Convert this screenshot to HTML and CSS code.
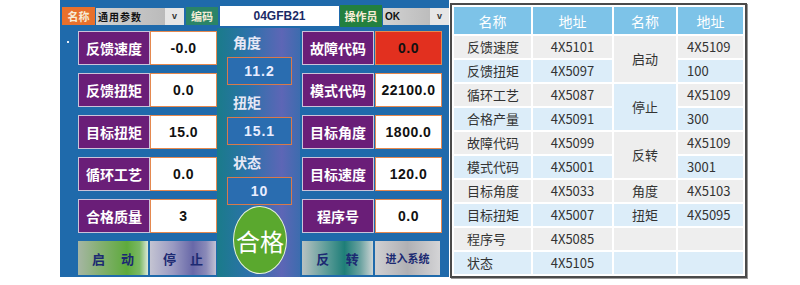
FILE: index.html
```html
<!DOCTYPE html>
<html lang="zh">
<head>
<meta charset="utf-8">
<link rel="stylesheet" href="styles.css">
</head>
<body>
<div class="page">
  <div class="panel">
    <div class="topbar">
      <span class="tag tag-orange">名称</span>
      <div class="select sel-param"><span class="sel-text">通用参数</span><span class="sel-arrow">v</span></div>
      <span class="tag tag-green tag-code">编码</span>
      <div class="code-box">04GFB21</div>
      <span class="tag tag-green tag-op">操作员</span>
      <div class="select sel-op"><span class="sel-text">OK</span><span class="sel-arrow">v</span></div>
    </div>
    <div class="main">
      <div class="gutter"><span class="dot"></span></div>
      <div class="fields">
        <div class="label">反馈速度</div><div class="value">-0.0</div>
        <div class="label">反馈扭矩</div><div class="value">0.0</div>
        <div class="label">目标扭矩</div><div class="value">15.0</div>
        <div class="label">循环工艺</div><div class="value">0.0</div>
        <div class="label">合格质量</div><div class="value">3</div>
        <div class="btn btn-start"><span>启</span><span>动</span></div>
        <div class="btn btn-stop"><span>停</span><span>止</span></div>
      </div>
      <div class="mid">
        <div class="mid-label first">角度</div>
        <div class="mid-box">11.2</div>
        <div class="mid-label">扭矩</div>
        <div class="mid-box">15.1</div>
        <div class="mid-label">状态</div>
        <div class="mid-box">10</div>
        <div class="pass">合格</div>
      </div>
      <div class="fields fields-right">
        <div class="label">故障代码</div><div class="value value-alarm">0.0</div>
        <div class="label">模式代码</div><div class="value">22100.0</div>
        <div class="label">目标角度</div><div class="value">1800.0</div>
        <div class="label">目标速度</div><div class="value">120.0</div>
        <div class="label">程序号</div><div class="value">0.0</div>
        <div class="btn btn-rev"><span>反</span><span>转</span></div>
        <div class="btn btn-enter">进入系统</div>
      </div>
    </div>
  </div>
  <div class="table-wrap">
    <table class="addr">
      <thead>
        <tr><th class="c1">名称</th><th class="c2">地址</th><th class="c3">名称</th><th class="c4">地址</th></tr>
      </thead>
      <tbody>
        <tr class="odd"><td class="name">反馈速度</td><td class="addr-c">4X5101</td><td class="merge grey" rowspan="2">启动</td><td class="val">4X5109</td></tr>
        <tr class="even"><td class="name">反馈扭矩</td><td class="addr-c">4X5097</td><td class="val">100</td></tr>
        <tr class="odd"><td class="name">循环工艺</td><td class="addr-c">4X5087</td><td class="merge blue" rowspan="2">停止</td><td class="val">4X5109</td></tr>
        <tr class="even"><td class="name">合格产量</td><td class="addr-c">4X5091</td><td class="val">300</td></tr>
        <tr class="odd"><td class="name">故障代码</td><td class="addr-c">4X5099</td><td class="merge grey" rowspan="2">反转</td><td class="val">4X5109</td></tr>
        <tr class="even"><td class="name">模式代码</td><td class="addr-c">4X5001</td><td class="val">3001</td></tr>
        <tr class="odd"><td class="name">目标角度</td><td class="addr-c">4X5033</td><td class="merge">角度</td><td class="val">4X5103</td></tr>
        <tr class="even"><td class="name">目标扭矩</td><td class="addr-c">4X5007</td><td class="merge">扭矩</td><td class="val">4X5095</td></tr>
        <tr class="odd"><td class="name">程序号</td><td class="addr-c">4X5085</td><td class="merge"></td><td class="val"></td></tr>
        <tr class="even"><td class="name">状态</td><td class="addr-c">4X5105</td><td class="merge"></td><td class="val"></td></tr>
      </tbody>
    </table>
  </div>
</div>
</body>
</html>
```

FILE: styles.css
```css
html, body {
  margin: 0;
  padding: 0;
}
body {
  width: 800px;
  height: 285px;
  overflow: hidden;
  background: #ffffff;
  font-family: "Noto Sans CJK SC", "Noto Sans", sans-serif;
}
.page {
  display: flex;
  align-items: flex-start;
  padding-left: 60px;
}

/* ---------- left HMI panel ---------- */
.panel {
  width: 389px;
  height: 277px;
  background: #1f6aab;
  display: flex;
  flex-direction: column;
}
.topbar {
  height: 24px;
  padding-top: 4px;
  padding-left: 2px;
  display: flex;
  align-items: center;
}
.tag {
  height: 18px;
  display: flex;
  align-items: center;
  justify-content: center;
  font-size: 11px;
  font-weight: 700;
  color: #f6ecd6;
}
.tag-orange {
  width: 33px;
  background: #e8702c;
}
.tag-green {
  background: #2a8468;
}
.tag-code {
  width: 32px;
  margin-left: 2px;
}
.tag-op {
  width: 42px;
  height: 22px;
  margin-left: 1px;
  background: #23803f;
}
.select {
  height: 17px;
  display: flex;
  align-items: stretch;
  margin-left: 1px;
  background: linear-gradient(90deg, #d2d2d2, #b4b4b4);
}
.sel-param { width: 88px; }
.sel-op { width: 66px; }
.sel-text {
  flex: 1;
  display: flex;
  align-items: center;
  padding-left: 2px;
  font-size: 10px;
  font-weight: 700;
  letter-spacing: 1px;
  color: #111;
}
.sel-op .sel-text {
  font-family: "Liberation Sans", sans-serif;
  letter-spacing: 0;
}
.sel-arrow {
  width: 19px;
  display: flex;
  align-items: center;
  justify-content: center;
  background: #e6e6e6;
  font-family: "Liberation Sans", sans-serif;
  font-size: 9px;
  font-weight: 700;
  color: #333;
}
.code-box {
  width: 119px;
  height: 20px;
  margin-left: 2px;
  background: #ffffff;
  display: flex;
  align-items: center;
  justify-content: center;
  font-family: "Liberation Sans", sans-serif;
  font-size: 12px;
  font-weight: 700;
  color: #1b2a66;
}

.main {
  height: 249px;
  display: flex;
}
.gutter {
  width: 18px;
  padding-top: 13px;
  box-sizing: border-box;
}
.dot {
  display: block;
  width: 2px;
  height: 2px;
  margin-left: 7px;
  background: #e8eef8;
}
.fields {
  display: grid;
  grid-template-columns: 72px 67px;
  grid-auto-rows: 34px;
  row-gap: 8px;
  padding-top: 3px;
}
.fields-right {
  padding-left: 2px;
  column-gap: 1px;
}
.label {
  box-sizing: border-box;
  background: #6a1e78;
  border: 1px solid #cbc3d9;
  display: flex;
  align-items: center;
  justify-content: center;
  font-size: 14px;
  font-weight: 700;
  color: #ffffff;
}
.value {
  box-sizing: border-box;
  background: #ffffff;
  border: 1.5px solid #e5894f;
  display: flex;
  align-items: center;
  justify-content: center;
  font-family: "Liberation Sans", sans-serif;
  font-size: 14px;
  font-weight: 700;
  letter-spacing: 0.5px;
  color: #111;
}
.value-alarm {
  background: #e2301f;
}
.btn {
  box-sizing: border-box;
  display: flex;
  align-items: center;
  justify-content: space-around;
  padding: 0 6px;
  font-size: 13px;
  font-weight: 700;
  color: #1c2a72;
}
.btn-start {
  width: 70px;
  background: linear-gradient(90deg, #a6b6a4 0%, #86b074 30%, #5eaa3c 70%, #7ab864 88%, #dce8d6 100%);
}
.btn-stop {
  width: 66px;
  background: linear-gradient(90deg, #c4c4d2 0%, #9a9ac2 35%, #6868a8 65%, #8a8ab8 85%, #c2c2d4 100%);
}
.btn-rev {
  width: 71px;
  background: linear-gradient(90deg, #b8c2c2 0%, #5c9c98 35%, #1e7e78 60%, #6aa2a0 82%, #cdd4d4 100%);
}
.btn-enter {
  width: 65px;
  justify-content: center;
  font-size: 11px;
  background: linear-gradient(90deg, #d0d0d2 0%, #b0b0b4 50%, #d4d4d6 100%);
}

.mid {
  width: 83px;
  display: flex;
  flex-direction: column;
  background: linear-gradient(90deg, #1a7b8a 0%, #2c72aa 38%, #5d66b6 78%, #3d6cae 100%);
}
.mid-label {
  height: 18px;
  margin-top: 8px;
  margin-left: 16px;
  font-size: 14px;
  font-weight: 700;
  line-height: 18px;
  color: #e6e8f6;
}
.mid-label.first {
  margin-top: 5px;
}
.mid-box {
  box-sizing: border-box;
  width: 65px;
  height: 28px;
  margin-top: 6px;
  margin-left: 10px;
  background: #2a6db0;
  border: 1.5px solid #d97a4a;
  display: flex;
  align-items: center;
  justify-content: center;
  font-family: "Liberation Sans", sans-serif;
  font-size: 14px;
  font-weight: 700;
  letter-spacing: 1px;
  color: #e9edff;
}
.pass {
  box-sizing: border-box;
  width: 54px;
  height: 68px;
  margin-top: 1px;
  margin-left: 16px;
  border-radius: 50%;
  background: #5aa82e;
  border: 1.5px solid #e6f2dc;
  display: flex;
  align-items: center;
  justify-content: center;
  font-size: 24px;
  color: #ffffff;
}

/* ---------- right address table ---------- */
.table-wrap {
  margin-left: 1px;
  margin-top: 3px;
  border: 2px solid #4a4a4a;
  background: #ffffff;
  box-shadow: 1px 1px 0 #9a9a9a;
}
.addr {
  border-collapse: separate;
  border-spacing: 2px;
  font-size: 13px;
  color: #333;
}
.addr th {
  height: 27px;
  padding: 0;
  background: #7dc3e8;
  color: #ffffff;
  font-size: 14px;
  font-weight: 400;
  text-align: center;
}
.addr td {
  height: 22px;
  padding: 0;
  line-height: 22px;
}
.c1 { width: 77px; }
.c2 { width: 79px; }
.c3 { width: 62px; }
.c4 { width: 65px; }
.odd td { background: #eeeeee; }
.even td { background: #dcedf9; }
.addr td.grey { background: #eeeeee; }
.addr td.blue { background: #dcedf9; }
.name {
  padding-left: 13px !important;
  text-align: left;
}
.addr-c {
  text-align: center;
}
.merge {
  text-align: center;
}
.val {
  padding-left: 9px !important;
  text-align: left;
}
```
